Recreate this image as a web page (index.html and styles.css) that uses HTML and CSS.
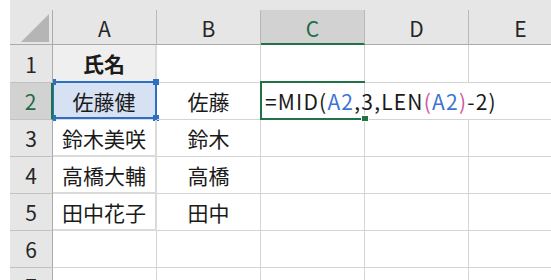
FILE: index.html
```html
<!DOCTYPE html>
<html lang="ja">
<head>
    <meta charset="utf-8" />
    <title>MID関数</title>
    <link rel="stylesheet" href="styles.css">
</head>
<body>
    <div class="frame">
        <div class="strip"></div>
        <div class="sheet">
            <div class="corner">
                <svg width="28" height="28" viewBox="0 0 28 28"><polygon points="28,0 28,28 0,28" fill="#b5b5b5" /></svg>
            </div>
            <div class="colhead">A</div>
            <div class="colhead">B</div>
            <div class="colhead active">C</div>
            <div class="colhead">D</div>
            <div class="colhead">E</div>

            <div class="rowhead">1</div>
            <div class="cell boxed title">氏名</div>
            <div class="cell"></div>
            <div class="cell"></div>
            <div class="cell"></div>
            <div class="cell"></div>

            <div class="rowhead active">2</div>
            <div class="cell boxed picked">佐藤健
                <div class="selection">
                    <span class="handle tl"></span>
                    <span class="handle tr"></span>
                    <span class="handle bl"></span>
                    <span class="handle br"></span>
                </div>
            </div>
            <div class="cell">佐藤</div>
            <div class="cell editing">
                <span class="formula">=MID(<span class="ref">A2</span>,3,LEN<span class="paren">(</span><span class="ref">A2</span><span class="paren">)</span>-2)</span>
                <div class="cursor"><span class="fill"></span></div>
            </div>
            <div class="cell spill"></div>
            <div class="cell spill"></div>

            <div class="rowhead">3</div>
            <div class="cell boxed">鈴木美咲</div>
            <div class="cell">鈴木</div>
            <div class="cell"></div>
            <div class="cell"></div>
            <div class="cell"></div>

            <div class="rowhead">4</div>
            <div class="cell boxed">高橋大輔</div>
            <div class="cell">高橋</div>
            <div class="cell"></div>
            <div class="cell"></div>
            <div class="cell"></div>

            <div class="rowhead">5</div>
            <div class="cell boxed">田中花子</div>
            <div class="cell">田中</div>
            <div class="cell"></div>
            <div class="cell"></div>
            <div class="cell"></div>

            <div class="rowhead">6</div>
            <div class="cell"></div>
            <div class="cell"></div>
            <div class="cell"></div>
            <div class="cell"></div>
            <div class="cell"></div>

            <div class="rowhead">7</div>
            <div class="cell"></div>
            <div class="cell"></div>
            <div class="cell"></div>
            <div class="cell"></div>
            <div class="cell"></div>
        </div>
    </div>
</body>
</html>
```

FILE: styles.css
```css
html, body {
    margin: 0;
    background: #ffffff;
    overflow: hidden;
}

body {
    width: 551px;
    height: 280px;
    font-family: "Noto Sans CJK JP", "Noto Sans", sans-serif;
    font-size: 21px;
    color: #1a1a1a;
}

.frame {
    margin-left: 10px;
    width: 600px;
}

.strip {
    height: 10px;
    background: #e6e6e6;
}

.sheet {
    display: grid;
    grid-template-columns: 43px repeat(5, 104px);
    grid-template-rows: 35px 38px repeat(6, 37px);
}

.corner, .colhead, .rowhead, .cell {
    box-sizing: border-box;
    display: flex;
    align-items: center;
    justify-content: center;
    white-space: nowrap;
}

.corner {
    background: #e6e6e6;
    border-right: 1px solid #ababab;
    border-bottom: 1px solid #ababab;
    align-items: flex-end;
    justify-content: flex-end;
    padding: 0 3px 2px 0;
}

.corner svg {
    display: block;
}

.colhead {
    background: #e6e6e6;
    border-right: 1px solid #b8b8b8;
    border-bottom: 1px solid #ababab;
    color: #262626;
    padding-top: 2px;
}

.colhead.active {
    background: #d2d2d2;
    color: #1e6b45;
    border-bottom: 2px solid #217346;
}

.rowhead {
    position: relative;
    z-index: 3;
    background: #e6e6e6;
    border-right: 1px solid #ababab;
    border-bottom: 1px solid #c2c2c2;
    color: #262626;
}

.rowhead.active {
    background: #d2d2d2;
    color: #1e6b45;
    border-right: 2px solid #217346;
}

.cell {
    position: relative;
    border-right: 1px solid #d4d4d4;
    border-bottom: 1px solid #d4d4d4;
}

.cell.boxed {
    border-right: 2px solid #dadada;
    border-bottom: 2px solid #dadada;
}

.cell.title {
    background: #efefef;
    font-weight: bold;
}

.cell.picked {
    background: #d6e2f3;
}

.selection {
    position: absolute;
    top: -2px;
    left: -1px;
    right: -2px;
    bottom: -1px;
    border: 2px solid #2e6fc6;
}

.handle {
    position: absolute;
    width: 6px;
    height: 6px;
    background: #2e6fc6;
}

.handle.tl { top: -4px; left: -4px; }
.handle.tr { top: -4px; right: -4px; }
.handle.bl { bottom: -4px; left: -4px; }
.handle.br { bottom: -4px; right: -4px; }

.cell.editing {
    justify-content: flex-start;
    padding-left: 4px;
    z-index: 2;
}

.cell.spill {
    border-right: none;
}

.formula {
    position: relative;
    z-index: 2;
    letter-spacing: 1.2px;
}

.ref {
    color: #3d74d4;
}

.paren {
    color: #cc5b9c;
}

.cursor {
    position: absolute;
    top: -2px;
    left: -1px;
    right: -1px;
    bottom: -1px;
    border: 2px solid #217346;
    border-right: none;
}

.fill {
    position: absolute;
    right: -4px;
    bottom: -4px;
    width: 6px;
    height: 5px;
    background: #217346;
    border: 1px solid #ffffff;
}
```
